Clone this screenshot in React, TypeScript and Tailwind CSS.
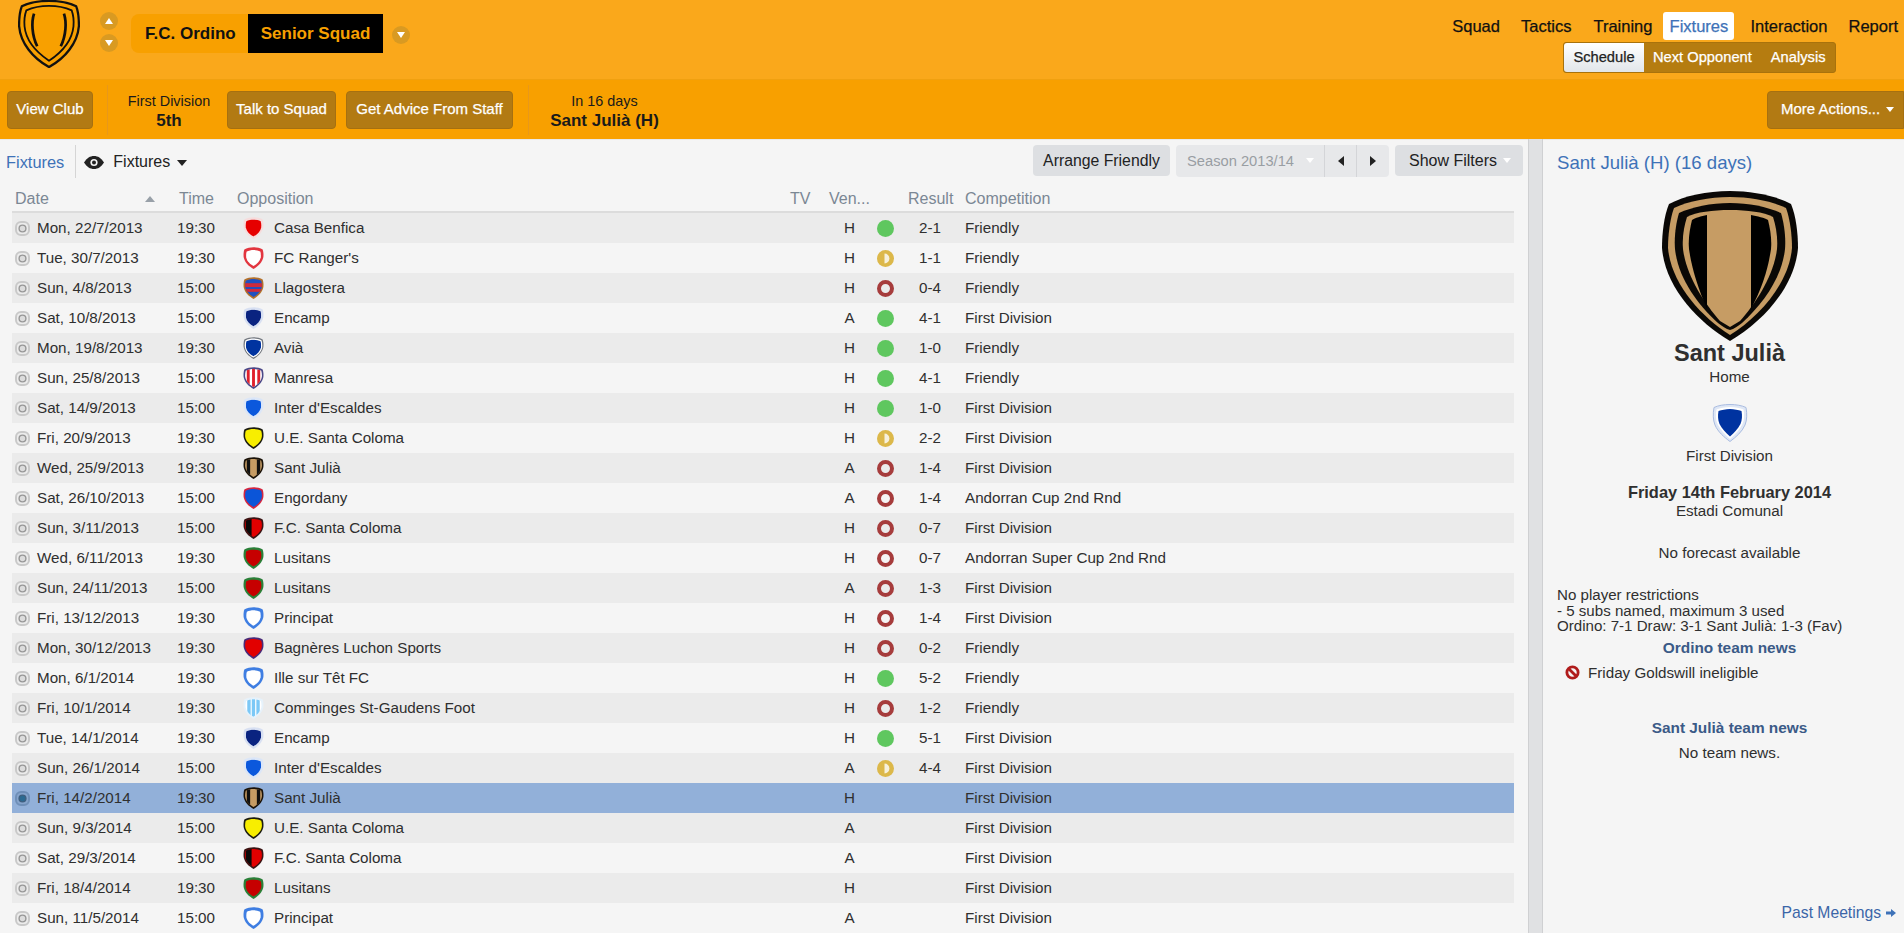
const SHIELD = "M12 .8C9 .8 5 1.6 2.4 3C1.7 5 1.4 8 1.7 11C2.8 17 7.6 21 12 23.4C16.4 21 21.2 17 22.3 11C22.6 8 22.3 5 21.6 3C19 1.6 15 .8 12 .8Z";

type Team = {
  outer: string;
  rim?: string;
  inner: string;
  scale?: number;
  bars?: [number, number, string][];
  hbars?: [number, number, string][];
};

const teams: Record<string, Team> = {
  benfica: { outer: "#f6dcdc", inner: "#e60000", scale: 0.78 },
  rangers: { outer: "#e2353f", inner: "#ffffff", scale: 0.74 },
  llagostera: { outer: "#b3702a", inner: "#2050c0", hbars: [[7, 4, "#d02a3c"], [13, 3, "#d02a3c"]] },
  encamp: { outer: "#d8e0f2", inner: "#0a2380", scale: 0.76 },
  avia: { outer: "#72777f", rim: "#ffffff", inner: "#0033a0", scale: 0.76 },
  manresa: { outer: "#4b4888", inner: "#ffffff", bars: [[5, 3, "#e0202c"], [10.5, 3, "#e0202c"], [16, 3, "#e0202c"]] },
  inter: { outer: "#dbe6f8", inner: "#0b58dc", scale: 0.76 },
  ue: { outer: "#1c1c10", inner: "#f8ee00" },
  julia: { outer: "#1a1208", inner: "#c69c64", bars: [[5, 3.5, "#111111"], [15.5, 3.5, "#111111"]] },
  engordany: { outer: "#d42640", inner: "#0b55d8" },
  fcsc: { outer: "#3a1414", inner: "#e20000", bars: [[4, 6, "#0a0a0a"]] },
  lusitans: { outer: "#2a8038", inner: "#c60000", scale: 0.78 },
  principat: { outer: "#3f7ee2", inner: "#ffffff", scale: 0.72 },
  bagneres: { outer: "#4a2a78", inner: "#e20000" },
  comminges: { outer: "#e6f2fb", inner: "#ffffff", scale: 0.8, bars: [[5.5, 3.5, "#7cc8f6"], [10.2, 3.5, "#7cc8f6"], [15, 3.5, "#7cc8f6"]] },
};

function Badge({ id }: { id: string }) {
  const t = teams[id];
  const clip = `clip-${id}`;
  const s = t.scale ?? 0.84;
  return (
    <svg viewBox="0 0 24 24" className="w-[23px] h-[24px]">
      <path d={SHIELD} fill={t.outer} />
      {t.rim && <path d={SHIELD} fill={t.rim} transform="translate(12 12) scale(.88) translate(-12 -12)" />}
      <clipPath id={clip}>
        <path d={SHIELD} transform={`translate(12 11.9) scale(${s}) translate(-12 -12)`} />
      </clipPath>
      <g clipPath={`url(#${clip})`}>
        <rect width="24" height="24" fill={t.inner} />
        {t.bars?.map(([x, w, c]) => <rect key={x} x={x} y="0" width={w} height="24" fill={c} />)}
        {t.hbars?.map(([y, h, c]) => <rect key={y} x="0" y={y} width="24" height={h} fill={c} />)}
      </g>
    </svg>
  );
}

function BigCrest() {
  return (
    <svg viewBox="0 0 136 150" className="w-[136px] h-[150px]">
      <path d="M68 0C45 0 22 5 7 13C2 25 0 42 0 57C3 95 34 130 68 150C102 130 133 95 136 57C136 42 134 25 129 13C114 5 91 0 68 0Z" fill="#0a0806" />
      <path d="M68 6C47 6 27 10 12 17C8 28 6 44 6 57C9 92 38 125 68 144C98 125 127 92 130 57C130 44 128 28 124 17C109 10 89 6 68 6Z" fill="#c69c64" />
      <path d="M68 12C49 12 30 16 17 22C14 32 12 46 13 58C16 86 34 112 56 132C60 135 64 138 68 139C72 138 76 135 80 132C102 112 120 86 123 58C124 46 122 32 119 22C106 16 87 12 68 12Z" fill="#0a0806" />
      <path d="M68 19C51 19 34 21 25 26C22 35 20 47 21 58C24 84 42 112 58 130L68 136L78 130C94 112 112 84 115 58C116 47 114 35 111 26C102 21 85 19 68 19Z" fill="#c69c64" />
      <path d="M45 24C39 25 33 27 30 29C28 37 26 48 27 58C30 79 36 97 45 118Z" fill="#000" />
      <path d="M89 24C95 25 103 27 106 29C108 37 110 48 109 58C106 79 100 97 89 118Z" fill="#000" />
    </svg>
  );
}

function ClubLogo() {
  return (
    <svg viewBox="0 0 136 150" className="w-[62px] h-[68px] ml-[18px] shrink-0">
      <path d="M68 2C45 2 22 7 8 14C3 26 2 42 2 57C5 95 32 128 68 148C104 128 131 95 134 57C134 42 133 26 128 14C114 7 91 2 68 2Z" fill="#f8a000" stroke="#111" strokeWidth="5" />
      <path d="M68 13C49 13 31 17 18 23C14 34 13 46 14 58C17 88 38 114 68 134C98 114 119 88 122 58C123 46 122 34 118 23C105 17 87 13 68 13Z" fill="none" stroke="#111" strokeWidth="4" />
      <path d="M35 30C29 48 30 78 42 102M101 30C107 48 106 78 94 102" fill="none" stroke="#111" strokeWidth="6" />
    </svg>
  );
}

function Radio({ on }: { on?: boolean }) {
  return (
    <svg viewBox="0 0 15 15" className="w-[15px] h-[15px] ml-[3px] shrink-0">
      <rect x="1" y="1" width="13" height="13" rx="5" fill={on ? "#86a4cc" : "#ececec"} stroke={on ? "#6f8fb8" : "#c9c9c9"} strokeWidth="2" />
      <circle cx="7.5" cy="7.5" r="3.4" fill={on ? "#2c6a92" : "#dcdcdc"} stroke={on ? "#3f5f7f" : "#979797"} strokeWidth="1.4" />
    </svg>
  );
}

function ResultDot({ r }: { r?: string }) {
  if (!r) return null;
  const [a, b] = r.split("-").map(Number);
  return (
    <svg viewBox="0 0 17 17" className="w-[17px] h-[17px]">
      {a > b && <circle cx="8.5" cy="8.5" r="8.5" fill="#5fc75f" />}
      {a === b && (
        <>
          <circle cx="8.5" cy="8.5" r="8.5" fill="#dcb84a" />
          <path d="M7.5 3.6A4.9 4.9 0 0 1 7.5 13.4Z" fill="#f7f1dc" />
        </>
      )}
      {a < b && <circle cx="8.5" cy="8.5" r="6.5" fill="none" stroke="#a63c3c" strokeWidth="4" />}
    </svg>
  );
}

const fixtures: [string, string, string, string, string, string | undefined, string][] = [
  ["Mon, 22/7/2013", "19:30", "benfica", "Casa Benfica", "H", "2-1", "Friendly"],
  ["Tue, 30/7/2013", "19:30", "rangers", "FC Ranger's", "H", "1-1", "Friendly"],
  ["Sun, 4/8/2013", "15:00", "llagostera", "Llagostera", "H", "0-4", "Friendly"],
  ["Sat, 10/8/2013", "15:00", "encamp", "Encamp", "A", "4-1", "First Division"],
  ["Mon, 19/8/2013", "19:30", "avia", "Avià", "H", "1-0", "Friendly"],
  ["Sun, 25/8/2013", "15:00", "manresa", "Manresa", "H", "4-1", "Friendly"],
  ["Sat, 14/9/2013", "15:00", "inter", "Inter d'Escaldes", "H", "1-0", "First Division"],
  ["Fri, 20/9/2013", "19:30", "ue", "U.E. Santa Coloma", "H", "2-2", "First Division"],
  ["Wed, 25/9/2013", "19:30", "julia", "Sant Julià", "A", "1-4", "First Division"],
  ["Sat, 26/10/2013", "15:00", "engordany", "Engordany", "A", "1-4", "Andorran Cup 2nd Rnd"],
  ["Sun, 3/11/2013", "15:00", "fcsc", "F.C. Santa Coloma", "H", "0-7", "First Division"],
  ["Wed, 6/11/2013", "19:30", "lusitans", "Lusitans", "H", "0-7", "Andorran Super Cup 2nd Rnd"],
  ["Sun, 24/11/2013", "15:00", "lusitans", "Lusitans", "A", "1-3", "First Division"],
  ["Fri, 13/12/2013", "19:30", "principat", "Principat", "H", "1-4", "First Division"],
  ["Mon, 30/12/2013", "19:30", "bagneres", "Bagnères Luchon Sports", "H", "0-2", "Friendly"],
  ["Mon, 6/1/2014", "19:30", "principat", "Ille sur Têt FC", "H", "5-2", "Friendly"],
  ["Fri, 10/1/2014", "19:30", "comminges", "Comminges St-Gaudens Foot", "H", "1-2", "Friendly"],
  ["Tue, 14/1/2014", "19:30", "encamp", "Encamp", "H", "5-1", "First Division"],
  ["Sun, 26/1/2014", "15:00", "inter", "Inter d'Escaldes", "A", "4-4", "First Division"],
  ["Fri, 14/2/2014", "19:30", "julia", "Sant Julià", "H", undefined, "First Division"],
  ["Sun, 9/3/2014", "15:00", "ue", "U.E. Santa Coloma", "A", undefined, "First Division"],
  ["Sat, 29/3/2014", "15:00", "fcsc", "F.C. Santa Coloma", "A", undefined, "First Division"],
  ["Fri, 18/4/2014", "19:30", "lusitans", "Lusitans", "H", undefined, "First Division"],
  ["Sun, 11/5/2014", "15:00", "principat", "Principat", "A", undefined, "First Division"],
];

function Chip({ label, className }: { label: string; className: string }) {
  return (
    <div className={`h-[38px] flex items-center justify-center rounded-[4px] bg-[#b27a13] border border-[#a67010] text-white text-[15px] [-webkit-text-stroke:0.25px_#fff] ${className}`}>
      {label}
    </div>
  );
}

function RoundBtn({ down, className }: { down?: boolean; className?: string }) {
  return (
    <div className={`w-[18px] h-[18px] rounded-full bg-[#d99a22] flex items-center justify-center ${className ?? ""}`}>
      <svg viewBox="0 0 8 6" className="w-[8px] h-[6px]">
        <path d={down ? "M0 0H8L4 6Z" : "M0 6H8L4 0Z"} fill="#fff" />
      </svg>
    </div>
  );
}

export default function App() {
  return (
    <div className="w-[1904px] h-[933px] overflow-hidden bg-[#f5f5f5] text-[#2f2f2f] font-['Liberation_Sans',sans-serif] text-[15.2px]">
      {/* top header */}
      <div className="h-[80px] bg-[#faa81b] flex items-start border-b border-[#f0a010]">
        <ClubLogo />
        <div className="ml-[20px] mt-[12px] flex flex-col gap-[4px] shrink-0">
          <RoundBtn />
          <RoundBtn down />
        </div>
        <div className="ml-[13px] mt-[14px] h-[39px] w-[252px] rounded-l-[8px] bg-[#f8a000] flex shrink-0">
          <div className="w-[117px] pl-[14px] flex items-center text-[17px] font-bold text-[#111]">F.C. Ordino</div>
          <div className="w-[135px] bg-black text-[#f8a000] text-[17px] font-bold flex items-center justify-center">Senior Squad</div>
        </div>
        <RoundBtn down className="ml-[9px] mt-[26px]" />
        <div className="ml-auto mr-[6px] mt-[12px] flex flex-col items-end">
          <div className="flex items-center h-[28px] text-[16.5px] text-[#111] [-webkit-text-stroke:0.25px_currentColor]">
            <span>Squad</span>
            <span className="ml-[21px]">Tactics</span>
            <span className="ml-[22px]">Training</span>
            <span className="ml-[11px] w-[71px] h-[28px] bg-white rounded-[3px] flex items-center justify-center text-[#3e72b8]">Fixtures</span>
            <span className="ml-[16px]">Interaction</span>
            <span className="ml-[21px]">Report</span>
          </div>
          <div className="mt-[2px] mr-[62px] h-[31px] w-[273px] rounded-[3px] bg-[#b57c10] border border-[#a8720c] flex items-center text-[14.7px] text-white [-webkit-text-stroke:0.25px_currentColor]">
            <span className="w-[80px] h-[29px] rounded-l-[3px] bg-gradient-to-b from-white to-[#e2e6ea] text-[#222] flex items-center justify-center">Schedule</span>
            <span className="ml-[9px]">Next Opponent</span>
            <span className="ml-[19px]">Analysis</span>
          </div>
        </div>
      </div>

      {/* action bar */}
      <div className="h-[59px] bg-[#f8a000] flex items-center text-[#1a1a1a]">
        <Chip label="View Club" className="ml-[7px] w-[86px]" />
        <div className="ml-[14px] w-px h-[50px] bg-[#e8981a]" />
        <div className="w-[119px] pl-[3px] pt-[2px] text-center leading-[19px] text-[14.4px]">
          <div>First Division</div>
          <div className="font-bold text-[17px]">5th</div>
        </div>
        <Chip label="Talk to Squad" className="w-[109px]" />
        <Chip label="Get Advice From Staff" className="ml-[10px] w-[167px]" />
        <div className="ml-[15px] w-px h-[50px] bg-[#e8981a]" />
        <div className="w-[151px] pt-[2px] text-center leading-[19px] text-[14.4px]">
          <div>In 16 days</div>
          <div className="font-bold text-[17px]">Sant Julià (H)</div>
        </div>
        <div className="ml-auto h-[38px] w-[137px] flex items-center pl-[13px] rounded-l-[4px] bg-[#b27a13] border border-[#a67010] text-white text-[15px] [-webkit-text-stroke:0.25px_#fff]">
          More Actions...
          <svg viewBox="0 0 8 5" className="w-[8px] h-[5px] ml-[6px]"><path d="M0 0H8L4 5Z" fill="#fff" /></svg>
        </div>
      </div>

      <div className="h-[794px] flex">
        {/* fixtures */}
        <div className="w-[1528px] shrink-0">
          <div className="h-[46px] flex items-start border-t border-[#e9e9e9]">
            <span className="ml-[6px] mt-[12px] leading-[20px] text-[16.4px] text-[#3e72b8]">Fixtures</span>
            <div className="ml-[11px] mt-[5px] w-px h-[33px] bg-[#d5d5d5]" />
            <svg viewBox="0 0 20 13" className="ml-[8px] mt-[16px] w-[20px] h-[13px]">
              <path d="M0 6.5C3 2 6 0 10 0S17 2 20 6.5C17 11 14 13 10 13S3 11 0 6.5Z" fill="#222" />
              <circle cx="10" cy="6.5" r="3.6" fill="#f5f5f5" />
              <circle cx="10" cy="6.5" r="2" fill="#222" />
            </svg>
            <span className="ml-[9px] mt-[12px] leading-[20px] text-[16px] text-[#222]">Fixtures</span>
            <svg viewBox="0 0 10 6" className="ml-[7px] mt-[20px] w-[10px] h-[6px]"><path d="M0 0H10L5 6Z" fill="#222" /></svg>
            <div className="ml-auto mt-[5px] h-[31px] w-[137px] rounded-[4px] bg-[#dddfe2] flex items-center justify-center text-[15.8px] text-[#222]">Arrange Friendly</div>
            <div className="ml-[6px] mt-[5px] h-[32px] w-[213px] rounded-[4px] bg-[#e7e8ea] flex items-center">
              <span className="w-[148px] pl-[11px] text-[14.7px] text-[#999ea3] flex items-center">
                Season 2013/14
                <svg viewBox="0 0 8 5" className="w-[8px] h-[5px] ml-[12px]"><path d="M0 0H8L4 5Z" fill="#fff" /></svg>
              </span>
              <span className="w-[32px] h-[32px] border-l border-[#d4d5d8] flex items-center justify-center">
                <svg viewBox="0 0 6 10" className="w-[6px] h-[10px]"><path d="M6 0V10L0 5Z" fill="#222" /></svg>
              </span>
              <span className="w-[33px] h-[32px] border-l border-[#d4d5d8] flex items-center justify-center">
                <svg viewBox="0 0 6 10" className="w-[6px] h-[10px]"><path d="M0 0V10L6 5Z" fill="#222" /></svg>
              </span>
            </div>
            <div className="ml-[6px] mr-[5px] mt-[5px] h-[31px] w-[128px] rounded-[4px] bg-[#dddfe2] flex items-center pl-[14px] text-[16px] text-[#222]">
              Show Filters
              <svg viewBox="0 0 8 5" className="w-[8px] h-[5px] ml-[6px]"><path d="M0 0H8L4 5Z" fill="#fff" /></svg>
            </div>
          </div>

          <div className="ml-[12px] w-[1502px]">
            <div className="h-[28px] pt-[1px] flex items-center border-b-2 border-[#dcdcdc] text-[16px] text-[#7b8794]">
              <div className="w-[165px] pl-[3px] pr-[22px] flex items-center justify-between">
                Date
                <svg viewBox="0 0 10 6" className="w-[10px] h-[6px]"><path d="M0 6H10L5 0Z" fill="#98a0a8" /></svg>
              </div>
              <div className="w-[60px] pl-[2px]">Time</div>
              <div className="w-[553px]">Opposition</div>
              <div className="w-[39px]">TV</div>
              <div className="w-[41px]">Ven...</div>
              <div className="w-[38px]" />
              <div className="w-[57px]">Result</div>
              <div>Competition</div>
            </div>
            {fixtures.map(([date, time, badge, team, venue, result, comp], i) => (
              <div
                key={date}
                className={`h-[30px] flex items-center text-[#2f2f2f] ${date === "Fri, 14/2/2014" ? "bg-[#92b0d9]" : i % 2 === 0 ? "bg-[#ebebeb]" : "bg-[#f5f5f5]"}`}
              >
                <Radio on={date === "Fri, 14/2/2014"} />
                <div className="w-[140px] ml-[7px] shrink-0">{date}</div>
                <div className="w-[60px] shrink-0">{time}</div>
                <div className="w-[37px] shrink-0 flex pl-[5px]">
                  <Badge id={badge} />
                </div>
                <div className="w-[555px] shrink-0">{team}</div>
                <div className="w-[41px] shrink-0 text-center">{venue}</div>
                <div className="w-[31px] shrink-0 flex justify-center"><ResultDot r={result} /></div>
                <div className="w-[58px] shrink-0 text-center">{result}</div>
                <div className="ml-[6px]">{comp}</div>
              </div>
            ))}
          </div>
        </div>

        {/* divider */}
        <div className="w-[15px] shrink-0 bg-[#e0e1e3] border-x border-[#cfd0d2]" />

        {/* match panel */}
        <div className="flex-1 flex flex-col items-center pt-[12px] pb-[11px] pl-[14px] pr-[2px] border-t border-[#e9e9e9]">
          <div className="self-stretch text-[18.6px] leading-[22px] text-[#3e72b8]">Sant Julià (H) (16 days)</div>
          <div className="mt-[17px] flex"><BigCrest /></div>
          <div className="font-bold text-[23.5px] leading-[24px]">Sant Julià</div>
          <div className="mt-[3px] leading-[18px]">Home</div>
          <svg viewBox="0 0 36 38" className="mt-[18px] w-[36px] h-[38px]">
            <path d="M18 .5C12 .5 6 1.5 2 3.5C.8 10 1 16 3 21C6 28 12 33 18 37.5C24 33 30 28 33 21C35 16 35.2 10 34 3.5C30 1.5 24 .5 18 .5Z" fill="#dfe7f5" stroke="#a9bce0" />
            <path d="M18 3C13 3 8 4 4.5 5.5C3.5 10 3.6 16 5.5 20C8.5 26 13 30.5 18 35C23 30.5 27.5 26 30.5 20C32.4 16 32.5 10 31.5 5.5C28 4 23 3 18 3Z" fill="#fff" />
            <path d="M18 5C14 5 9.5 6 6.5 7C5.7 11 5.8 16 7.5 20C10 25 14 29 18 32.5C22 29 26 25 28.5 20C30.2 16 30.3 11 29.5 7C26.5 6 22 5 18 5Z" fill="#0033a0" />
          </svg>
          <div className="mt-[5px] leading-[18px]">First Division</div>
          <div className="mt-[17px] font-bold text-[16.4px] leading-[20px]">Friday 14th February 2014</div>
          <div className="leading-[18px]">Estadi Comunal</div>
          <div className="mt-[24px] leading-[18px]">No forecast available</div>
          <div className="mt-[25px] self-stretch text-[15.1px] leading-[15.5px]">
            <div>No player restrictions</div>
            <div>- 5 subs named, maximum 3 used</div>
            <div>Ordino: 7-1 Draw: 3-1 Sant Julià: 1-3 (Fav)</div>
          </div>
          <div className="mt-[4px] font-bold text-[15.4px] text-[#3b5a87] leading-[20px]">Ordino team news</div>
          <div className="mt-[6px] self-stretch flex items-center leading-[18px] pl-[8px]">
            <svg viewBox="0 0 16 16" className="w-[15px] h-[15px] mr-[8px]">
              <circle cx="8" cy="8" r="6" fill="none" stroke="#b01c1c" strokeWidth="3" />
              <path d="M4 4L12 12" stroke="#b01c1c" strokeWidth="3" />
            </svg>
            Friday Goldswill ineligible
          </div>
          <div className="mt-[36px] font-bold text-[15.4px] text-[#3b5a87] leading-[20px]">Sant Julià team news</div>
          <div className="mt-[6px] leading-[18px]">No team news.</div>
          <div className="mt-auto mr-[6px] self-end flex items-center text-[15.7px] leading-[18px] text-[#3b66a8]">
            Past Meetings
            <svg viewBox="0 0 10 8" className="ml-[5px] w-[10px] h-[8px]"><path d="M0 2.5H5V0L10 4L5 8V5.5H0Z" fill="#3e72b8" /></svg>
          </div>
        </div>
      </div>
    </div>
  );
}
